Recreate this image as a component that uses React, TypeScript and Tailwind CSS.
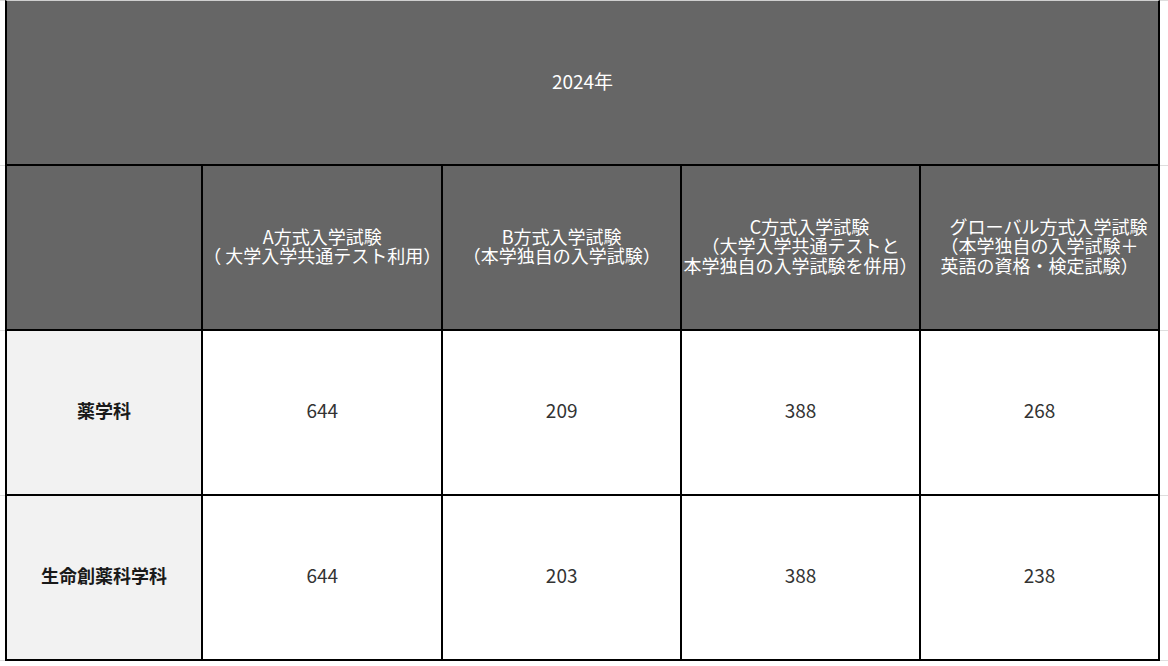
const headers: string[][] = [
  ['A方式入学試験', '（ 大学入学共通テスト利用）'],
  ['B方式入学試験', '（本学独自の入学試験）'],
  ['\u3000C方式入学試験', '（大学入学共通テストと', '本学独自の入学試験を併用）'],
  ['\u3000グローバル方式入学試験', '（本学独自の入学試験＋', '英語の資格・検定試験）'],
]

const rows = [
  { name: '薬学科', values: ['644', '209', '388', '268'] },
  { name: '生命創薬科学科', values: ['644', '203', '388', '238'] },
]

function EdgeCell({ top }: { top?: boolean }) {
  return <td className={`p-0 border-b border-[#dedede] ${top ? 'border-t' : ''}`} />
}

export default function App() {
  return (
    <div
      className="h-[666px] w-[1168px] overflow-hidden bg-white"
      style={{ fontFamily: '"Noto Sans CJK JP", "Noto Sans", sans-serif' }}
    >
      <table className="table-fixed border-separate border-spacing-0">
        <colgroup>
          <col className="w-[5px]" />
          <col className="w-[199px]" />
          <col className="w-[239px]" />
          <col className="w-[239px]" />
          <col className="w-[239px]" />
          <col className="w-[239px]" />
          <col className="w-[8px]" />
        </colgroup>
        <tbody>
          <tr className="h-[166px]">
            <EdgeCell top />
            <td
              colSpan={5}
              className="border-x-2 border-b-2 border-t border-x-black border-b-black border-t-[#cfcfcf] bg-[#666666] p-0 pb-[2px] text-center text-[19px] text-white"
            >
              2024年
            </td>
            <EdgeCell top />
          </tr>
          <tr className="h-[165px]">
            <EdgeCell />
            <td className="border-x-2 border-b-2 border-black bg-[#666666] p-0" />
            {headers.map((lines, i) => (
              <td
                key={i}
                className="border-r-2 border-b-2 border-black bg-[#666666] p-0 pb-[3px] text-center text-[18px] leading-[19.5px] text-white"
              >
                {lines.map((l, j) => (
                  <div key={j} className="whitespace-pre">
                    {l}
                  </div>
                ))}
              </td>
            ))}
            <EdgeCell />
          </tr>
          {rows.map((row) => (
            <tr key={row.name} className="h-[165px]">
              <EdgeCell />
              <td className="border-x-2 border-b-2 border-black bg-[#f2f2f2] p-0 pb-[5px] text-center text-[18px] font-bold text-[#1a1a1a]">
                {row.name}
              </td>
              {row.values.map((v, i) => (
                <td
                  key={i}
                  className="border-r-2 border-b-2 border-black bg-white p-0 pb-[4px] text-center text-[19px] text-[#333333]"
                >
                  {v}
                </td>
              ))}
              <EdgeCell />
            </tr>
          ))}
        </tbody>
      </table>
    </div>
  )
}
